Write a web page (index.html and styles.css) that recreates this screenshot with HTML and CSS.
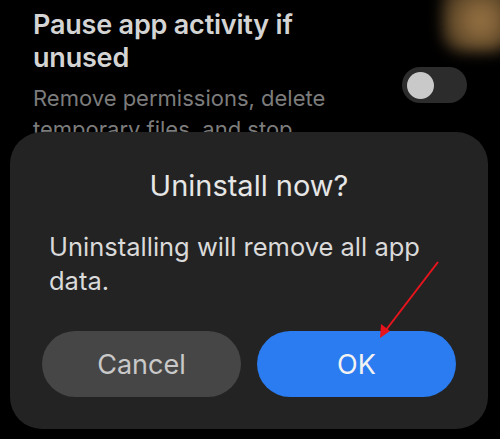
FILE: index.html
```html
<!DOCTYPE html>
<html>
<head>
<meta charset="utf-8">
<link rel="stylesheet" href="styles.css">
</head>
<body>
<div class="screen">
  <div class="blob"></div>
  <div class="setting">
    <div class="setting-text">
      <div class="setting-title">Pause app activity if unused</div>
      <div class="setting-desc">Remove permissions, delete temporary files, and stop notifications</div>
    </div>
    <div class="toggle"><div class="knob"></div></div>
  </div>
  <div class="dialog">
    <div class="dialog-title">Uninstall now?</div>
    <div class="dialog-body">Uninstalling will remove all app data.</div>
    <div class="dialog-buttons">
      <div class="btn btn-cancel">Cancel</div>
      <div class="btn btn-ok">OK</div>
    </div>
  </div>
  <svg class="arrow" width="500" height="439" viewBox="0 0 500 439">
    <line x1="438" y1="262" x2="386" y2="330" stroke="#e8141c" stroke-width="2"/>
    <polygon points="380,338 381,324 390,331" fill="#e8141c"/>
  </svg>
</div>
</body>
</html>
```
FILE: styles.css
```css
html, body {
  margin: 0;
  padding: 0;
  background: #000;
}
.screen {
  position: relative;
  width: 500px;
  height: 439px;
  overflow: hidden;
  background: #000;
  font-family: Inter, "Noto Sans", sans-serif;
}
.blob {
  position: absolute;
  left: 442px;
  top: -18px;
  width: 70px;
  height: 70px;
  border-radius: 20px;
  background: radial-gradient(circle at 55% 55%, #9c7646 0%, #6e532f 45%, #1a140c 100%);
  filter: blur(7px);
}
.setting {
  display: flex;
  align-items: flex-start;
  padding: 8px 33px 0 33px;
}
.setting-text {
  width: 300px;
}
.setting-title {
  color: #d4d4d4;
  font-size: 27px;
  font-weight: 600;
  line-height: 33px;
  letter-spacing: -0.2px;
}
.setting-desc {
  margin-top: 9px;
  color: #7c7c7c;
  font-size: 22px;
  line-height: 31px;
}
.toggle {
  margin-left: auto;
  margin-top: 59px;
  width: 65px;
  height: 36px;
  border-radius: 18px;
  background: #2c2c2c;
  display: flex;
  align-items: center;
  padding-left: 5px;
  box-sizing: border-box;
  flex-shrink: 0;
}
.knob {
  width: 27px;
  height: 27px;
  border-radius: 50%;
  background: #c9c9c9;
}
.dialog {
  position: absolute;
  left: 10px;
  top: 132px;
  width: 478px;
  height: 297px;
  box-sizing: border-box;
  border-radius: 32px;
  background: #232323;
  padding: 37px 32px 32px 32px;
  display: flex;
  flex-direction: column;
}
.dialog-title {
  text-align: center;
  color: #e6e6e6;
  font-size: 29px;
  line-height: 34px;
}
.dialog-body {
  margin-top: 27px;
  padding: 0 7px;
  color: #dadada;
  font-size: 25.5px;
  line-height: 34px;
}
.dialog-buttons {
  margin-top: auto;
  display: flex;
  gap: 16px;
}
.btn {
  flex: 1;
  height: 66px;
  border-radius: 33px;
  display: flex;
  align-items: center;
  justify-content: center;
  font-size: 27px;
}
.btn-cancel {
  background: #464646;
  color: #c9c9c9;
}
.btn-ok {
  background: #2a7cf0;
  color: #f2f2f2;
}
.arrow {
  position: absolute;
  left: 0;
  top: 0;
}
```
